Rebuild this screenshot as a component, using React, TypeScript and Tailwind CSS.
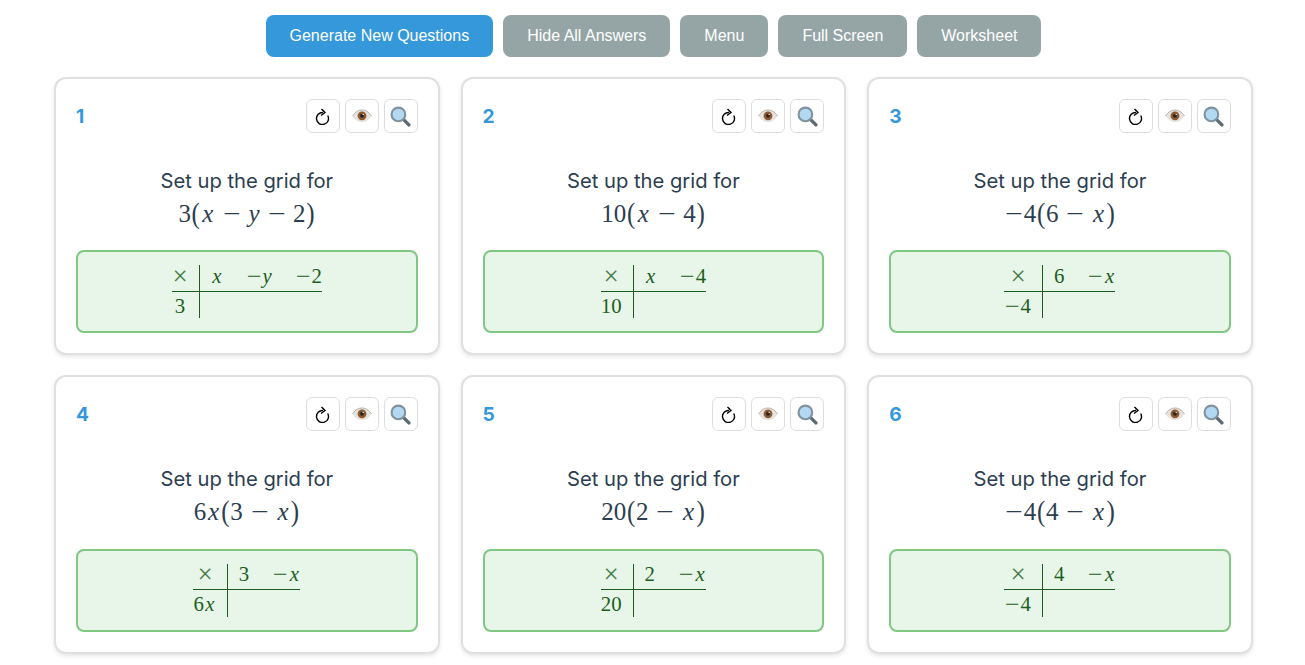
const cards = [
  { id: 1, q: "3(x−y−2)", left: "3", cols: ["x", "−y", "−2"] },
  { id: 2, q: "10(x−4)", left: "10", cols: ["x", "−4"] },
  { id: 3, q: "−4(6−x)", left: "−4", cols: ["6", "−x"] },
  { id: 4, q: "6x(3−x)", left: "6x", cols: ["3", "−x"] },
  { id: 5, q: "20(2−x)", left: "20", cols: ["2", "−x"] },
  { id: 6, q: "−4(4−x)", left: "−4", cols: ["4", "−x"] },
];

const buttons = ["Hide All Answers", "Menu", "Full Screen", "Worksheet"];

// digits are upright, letters italic, minus is stretched to the wider math width
function MathText({ text, spaced }: { text: string; spaced?: boolean }) {
  return (
    <span className="whitespace-nowrap font-['Liberation_Serif',serif]">
      {text.split("").map((c, i) => {
        if (c === "−") {
          const binary = spaced && i > 0;
          return (
            <span
              key={i}
              className={`inline-block w-[0.778em] scale-x-[1.25] text-center ${binary ? "mx-[0.27em]" : ""}`}
            >
              {c}
            </span>
          );
        }
        if (c === "x") {
          return <span key={i} className="inline-block w-[0.572em] text-center italic">x</span>;
        }
        if (c === "y") {
          return <span key={i} className="inline-block w-[0.49em] text-center italic">y</span>;
        }
        if (c === "(" || c === ")") {
          return <span key={i} className="inline-block w-[0.389em] scale-y-[1.15] text-center">{c}</span>;
        }
        return <span key={i}>{c}</span>;
      })}
    </span>
  );
}

function RefreshIcon() {
  return (
    <svg width="16" height="17" viewBox="0 0 16 17" fill="none" stroke="#000" strokeWidth="1.4">
      <path d="M12.700 7.500A6 6 0 1 1 8 4.500" />
      <path d="M6.500 1 10 4.500 6 7.500" />
    </svg>
  );
}

function EyeIcon() {
  return (
    <svg width="20" height="14" viewBox="0 0 20 14">
      <path d="M0.500 7C3.500 2.600 6.500 1 10 1s6.500 1.600 9.500 6C16.500 11.400 13.500 13 10 13S3.500 11.400 0.500 7Z" fill="#e6e2dd" />
      <path d="M0.500 7C3.500 2.600 6.500 1 10 1s6.500 1.600 9.500 6" fill="none" stroke="#a9a29a" strokeWidth="0.800" />
      <circle cx="10" cy="6.800" r="4.400" fill="#8b5a33" />
      <circle cx="10" cy="6.800" r="2" fill="#2a2320" />
      <circle cx="11.200" cy="5.400" r="0.700" fill="#fff" />
    </svg>
  );
}

function LensIcon() {
  return (
    <svg width="21" height="21" viewBox="0 0 20 20">
      <path d="M12.500 12.500 18 18" stroke="#5c6b73" strokeWidth="3.200" strokeLinecap="round" />
      <circle cx="8" cy="8" r="6.500" fill="#b3d9f2" stroke="#7f929e" strokeWidth="2" />
    </svg>
  );
}

function IconButton({ children }: { children: React.ReactNode }) {
  return (
    <button className="flex h-[34px] w-[34px] items-center justify-center rounded-md border border-[#dddddd] bg-white">
      {children}
    </button>
  );
}

function AnswerGrid({ left, cols }: { left: string; cols: string[] }) {
  return (
    <table className="mx-auto border-collapse text-[20.800px] leading-none text-[#1b5e20]">
      <tbody>
        <tr className="h-[26px]">
          <td className="border-r border-b border-[#1b5e20] pr-[11px] pb-[4px] text-center">
            <span className="inline-block w-[0.778em] scale-[1.3] font-['Liberation_Serif',serif] opacity-80">×</span>
          </td>
          {cols.map((c, i) => (
            <td
              key={i}
              className={`border-b border-[#1b5e20] pb-[4px] text-center ${i === 0 ? "pl-[11px]" : "pl-[23px]"}`}
            >
              <MathText text={c} />
            </td>
          ))}
        </tr>
        <tr className="h-[27px]">
          <td className="border-r border-[#1b5e20] pt-[2px] pr-[11px] text-center">
            <MathText text={left} />
          </td>
          <td colSpan={cols.length}></td>
        </tr>
      </tbody>
    </table>
  );
}

function Card({ card }: { card: (typeof cards)[number] }) {
  return (
    <div className="h-[278.400px] rounded-xl border-2 border-[#e0e0e0] bg-white px-5 pt-5 shadow-[0_2px_4px_rgba(0,0,0,0.1)]">
      <div className="flex items-center justify-between">
        <span className="font-['Inter',sans-serif] text-[19.200px] font-bold text-[#3498db]">{card.id}</span>
        <div className="flex gap-[5px]">
          <IconButton><RefreshIcon /></IconButton>
          <IconButton><EyeIcon /></IconButton>
          <IconButton><LensIcon /></IconButton>
        </div>
      </div>
      <div className="mt-[36px] text-center text-[#2c3e50]">
        <div className="font-['Inter',sans-serif] text-[20.200px] leading-[24px]">Set up the grid for</div>
        <div className="mt-[3px] text-[25px] leading-[35px]">
          <MathText text={card.q} spaced />
        </div>
      </div>
      <div className="mt-[19.400px] h-[83px] rounded-lg border-2 border-[#81c784] bg-[#e8f5e9] pt-[13px]">
        <AnswerGrid left={card.left} cols={card.cols} />
      </div>
    </div>
  );
}

export default function App() {
  return (
    <div className="min-h-screen bg-white pt-[15px] font-['Liberation_Sans',sans-serif]">
      <div className="flex justify-center gap-[10px] pl-[2px]">
        <button className="h-[42px] rounded-lg bg-[#3498db] px-6 text-base text-white">
          Generate New Questions
        </button>
        {buttons.map((b) => (
          <button key={b} className="h-[42px] rounded-lg bg-[#95a5a6] px-6 text-base text-white">
            {b}
          </button>
        ))}
      </div>
      <div className="mt-[20px] grid grid-cols-3 gap-x-[20.900px] gap-y-[19.800px] pr-[52.200px] pl-[54px]">
        {cards.map((c) => (
          <Card key={c.id} card={c} />
        ))}
      </div>
    </div>
  );
}
